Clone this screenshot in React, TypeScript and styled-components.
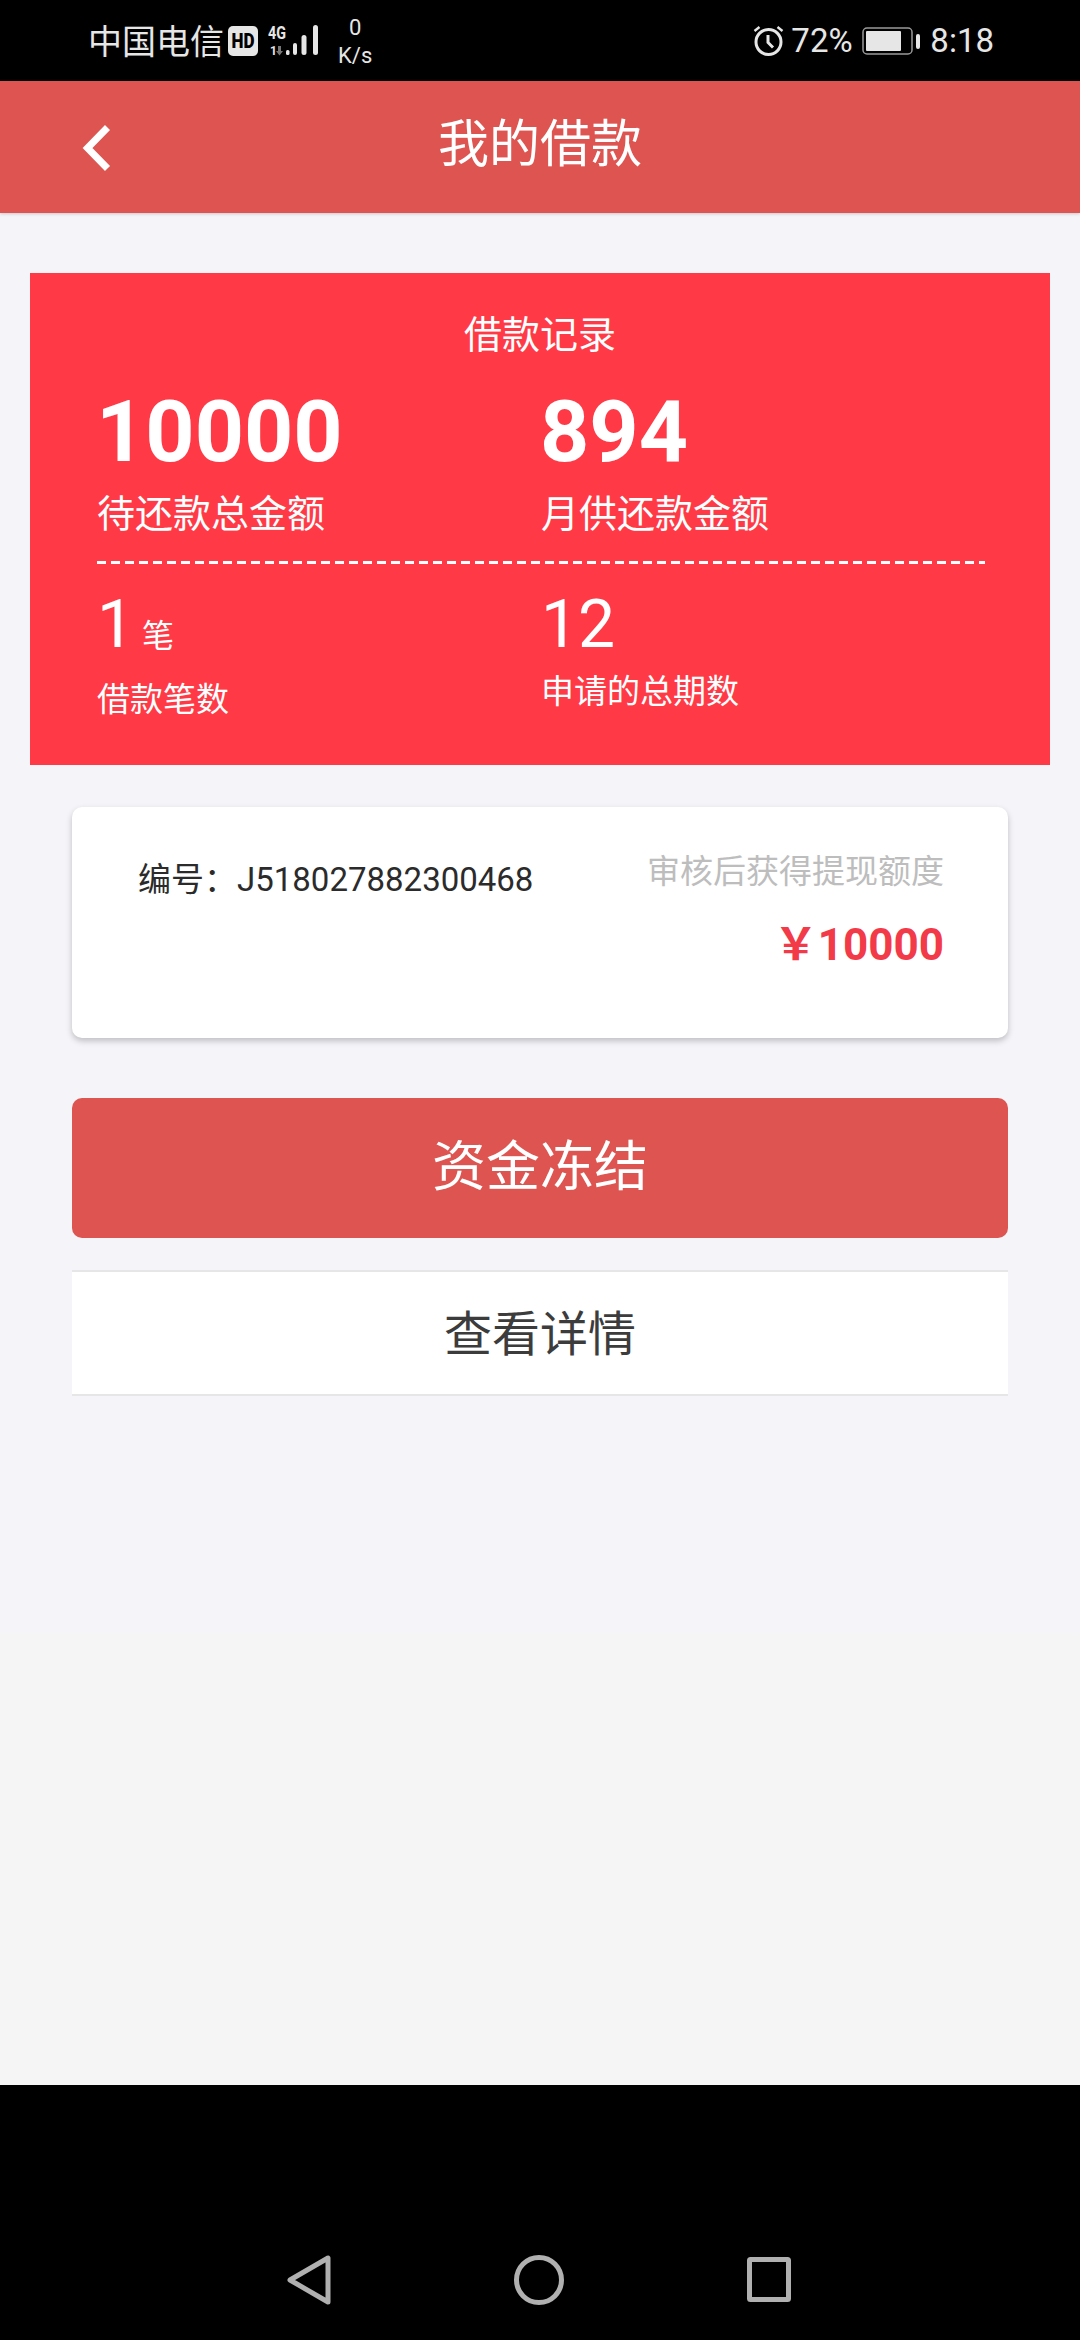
import React from 'react';
import { styled, createGlobalStyle } from 'styled-components';

const GlobalStyle = createGlobalStyle`
  html, body {
    margin: 0;
    padding: 0;
    background: #000;
  }
  * {
    box-sizing: border-box;
  }
`;

const Screen = styled.div`
  width: 1080px;
  height: 2340px;
  display: flex;
  flex-direction: column;
  font-family: Roboto, 'Noto Sans CJK SC', sans-serif;
  background: #000;
  overflow: hidden;
`;

const StatusBar = styled.div`
  height: 81px;
  flex: none;
  display: flex;
  align-items: center;
  justify-content: space-between;
  padding: 0 86px 0 88px;
  background: #000;
  color: #e6e6e6;
  font-size: 33px;
`;

const StatusGroup = styled.div`
  display: flex;
  align-items: center;
`;

const Carrier = styled.span`
  font-size: 34px;
  line-height: 40px;
  width: 140px;
  margin-top: 2px;
`;

const Speed = styled.div`
  display: flex;
  flex-direction: column;
  align-items: center;
  margin-left: 18px;
  font-size: 22px;
  line-height: 28px;
  margin-top: 3px;
`;

const Percent = styled.span`
  margin-left: 7px;
  width: 70px;
  line-height: 40px;
`;

const Clock = styled.span`
  margin-left: 10px;
  line-height: 40px;
`;

const Header = styled.div`
  height: 132px;
  flex: none;
  position: relative;
  display: flex;
  align-items: center;
  justify-content: center;
  padding-bottom: 14px;
  background: #dd5450;
  color: #fff;
  font-size: 51px;
  box-shadow: 0 1px 3px rgba(0, 0, 0, 0.18);
  z-index: 1;
`;

const BackIcon = styled.svg`
  position: absolute;
  left: 82px;
  top: 44px;
`;

const Page = styled.div`
  height: 1420px;
  flex: none;
  padding-top: 60px;
  background: #f4f4f9;
`;

const Summary = styled.section`
  height: 492px;
  margin: 0 30px;
  padding: 37px 67px 0;
  background: #ff3a46;
  color: #fff;
`;

const SummaryTitle = styled.div`
  margin-left: -67px;
  margin-right: -67px;
  text-align: center;
  font-size: 38px;
  line-height: 50px;
`;

const StatRow = styled.div<{ $top: number }>`
  display: flex;
  margin-top: ${({ $top }) => $top}px;
`;

const Stat = styled.div`
  width: 444px;
  flex: none;
`;

const BigValue = styled.div`
  font-size: 86px;
  font-weight: 700;
  line-height: 100px;
  margin-left: -1px;
`;

const BigLabel = styled.div`
  font-size: 38px;
  line-height: 50px;
  margin-top: 7px;
`;

const Dashed = styled.div`
  width: 888px;
  height: 3px;
  margin-top: 22px;
  background: repeating-linear-gradient(90deg, #fff 0, #fff 9px, transparent 9px, transparent 14px);
`;

const SmallValue = styled.div`
  display: flex;
  align-items: baseline;
  font-size: 66px;
  line-height: 76px;
`;

const Unit = styled.span`
  font-size: 32px;
  margin-left: 8px;
`;

const SmallLabel = styled.div<{ $top: number }>`
  font-size: 33px;
  line-height: 44px;
  margin-top: ${({ $top }) => $top}px;
`;

const LoanCard = styled.section`
  height: 231px;
  margin: 42px 72px 0;
  padding: 42px 64px 0 66px;
  display: flex;
  justify-content: space-between;
  background: #fff;
  border-radius: 10px;
  box-shadow: 0 3px 6px rgba(0, 0, 0, 0.22);
`;

const LoanNumber = styled.div`
  font-size: 33px;
  line-height: 46px;
  color: #2b2b2b;
  margin-top: 8px;
`;

const LoanAside = styled.div`
  display: flex;
  flex-direction: column;
  align-items: flex-end;
`;

const AsideLabel = styled.div`
  font-size: 33px;
  line-height: 46px;
  color: #bdbdbd;
`;

const AsideAmount = styled.div`
  font-size: 44px;
  font-weight: 700;
  line-height: 50px;
  margin-top: 25px;
  color: #f23a48;
`;

const FreezeButton = styled.button`
  display: block;
  width: 936px;
  height: 140px;
  margin: 60px 72px 0;
  padding: 0 0 12px;
  border: none;
  border-radius: 10px;
  background: #dd5450;
  color: #fff;
  font-family: inherit;
  font-size: 54px;
`;

const DetailButton = styled.button`
  display: block;
  width: 936px;
  height: 126px;
  margin: 32px 72px 0;
  padding: 0 0 7px;
  border: none;
  border-top: 2px solid #e6e6e6;
  border-bottom: 2px solid #e6e6e6;
  background: #fff;
  color: #3c3c3c;
  font-family: inherit;
  font-size: 48px;
`;

const LowerArea = styled.div`
  height: 452px;
  flex: none;
  background: #f5f5f5;
`;

const NavBar = styled.div`
  flex: 1;
  display: flex;
  align-items: flex-start;
  padding-top: 170px;
  background: #000;
`;

const NavIcon = styled.svg<{ $left: number; $top?: number }>`
  margin-left: ${({ $left }) => $left}px;
  margin-top: ${({ $top }) => $top ?? 0}px;
  flex: none;
`;

const SignalWrap = styled.svg`
  margin-left: 10px;
  flex: none;
`;

function SignalIcon() {
  return (
    <SignalWrap width="52" height="40" viewBox="0 -4 52 40">
      <text x="0" y="14" fontFamily="Roboto" fontSize="18" fontWeight="700" fill="#e6e6e6" textLength="18" lengthAdjust="spacingAndGlyphs">4G</text>
      <text x="2" y="30" fontFamily="Roboto" fontSize="12" fontWeight="700" fill="#e6e6e6">1</text>
      <path d="M10 21h3v5h2l-3.5 4.5L8 26h2z" fill="#777" />
      <rect x="18" y="25" width="3.5" height="5" rx="1.5" fill="#e6e6e6" />
      <rect x="25" y="18" width="4" height="12" rx="2" fill="#e6e6e6" />
      <rect x="33.5" y="10" width="5" height="20" rx="2.5" fill="#e6e6e6" />
      <rect x="45" y="0" width="5" height="30" rx="2.5" fill="#e6e6e6" />
    </SignalWrap>
  );
}

export default function App() {
  return (
    <>
      <GlobalStyle />
      <Screen>
        <StatusBar>
          <StatusGroup>
            <Carrier>中国电信</Carrier>
            <svg width="30" height="30" viewBox="0 0 30 30">
              <rect width="30" height="30" rx="5" fill="#e6e6e6" />
              <text x="15" y="22" textAnchor="middle" fontFamily="Roboto" fontSize="20" fontWeight="900" fill="#000" textLength="23" lengthAdjust="spacingAndGlyphs">HD</text>
            </svg>
            <SignalIcon />
            <Speed>
              <span>0</span>
              <span>K/s</span>
            </Speed>
          </StatusGroup>
          <StatusGroup>
            <svg width="31" height="31" viewBox="0 0 31 31" fill="none" stroke="#e6e6e6" strokeWidth="3">
              <circle cx="15.5" cy="17" r="12.5" />
              <path d="M15 10v7.5l5 5" />
              <path d="M1.5 6l5-4M29.5 6l-5-4" strokeWidth="2.4" />
            </svg>
            <Percent>72%</Percent>
            <svg width="59" height="28" viewBox="0 0 59 28">
              <rect x="2" y="1" width="49" height="26" rx="4" fill="none" stroke="#999" strokeWidth="1.5" />
              <rect x="5" y="4" width="35" height="20" rx="1" fill="#e6e6e6" />
              <rect x="55" y="7" width="4" height="15" rx="2" fill="#e6e6e6" />
            </svg>
            <Clock>8:18</Clock>
          </StatusGroup>
        </StatusBar>

        <Header>
          <BackIcon width="30" height="46" viewBox="0 0 30 46" fill="none" stroke="#fff" strokeWidth="7">
            <path d="M25.5 2.5 5.5 23l20 20.5" />
          </BackIcon>
          我的借款
        </Header>

        <Page>
          <Summary>
            <SummaryTitle>借款记录</SummaryTitle>
            <StatRow $top={22}>
              <Stat>
                <BigValue>10000</BigValue>
                <BigLabel>待还款总金额</BigLabel>
              </Stat>
              <Stat>
                <BigValue>894</BigValue>
                <BigLabel>月供还款金额</BigLabel>
              </Stat>
            </StatRow>
            <Dashed />
            <StatRow $top={23}>
              <Stat>
                <SmallValue>
                  1<Unit>笔</Unit>
                </SmallValue>
                <SmallLabel $top={4}>借款笔数</SmallLabel>
              </Stat>
              <Stat>
                <SmallValue>12</SmallValue>
                <SmallLabel $top={7}>申请的总期数</SmallLabel>
              </Stat>
            </StatRow>
          </Summary>

          <LoanCard>
            <LoanNumber>编号：J518027882300468</LoanNumber>
            <LoanAside>
              <AsideLabel>审核后获得提现额度</AsideLabel>
              <AsideAmount>￥10000</AsideAmount>
            </LoanAside>
          </LoanCard>

          <FreezeButton>资金冻结</FreezeButton>
          <DetailButton>查看详情</DetailButton>
        </Page>

        <LowerArea />

        <NavBar>
          <NavIcon $left={286} width="46" height="50" viewBox="0 0 46 50" fill="none" stroke="#b0b0b0" strokeWidth="5" strokeLinejoin="round">
            <path d="M42 3v44L4 25z" />
          </NavIcon>
          <NavIcon $left={181} width="52" height="50" viewBox="0 0 52 50" fill="none" stroke="#b0b0b0" strokeWidth="5">
            <circle cx="26" cy="25" r="22.5" />
          </NavIcon>
          <NavIcon $left={182} $top={2} width="44" height="45" viewBox="0 0 44 45" fill="none" stroke="#b0b0b0" strokeWidth="5" strokeLinejoin="round">
            <rect x="2.5" y="2.5" width="39" height="40" rx="1" />
          </NavIcon>
        </NavBar>
      </Screen>
    </>
  );
}
